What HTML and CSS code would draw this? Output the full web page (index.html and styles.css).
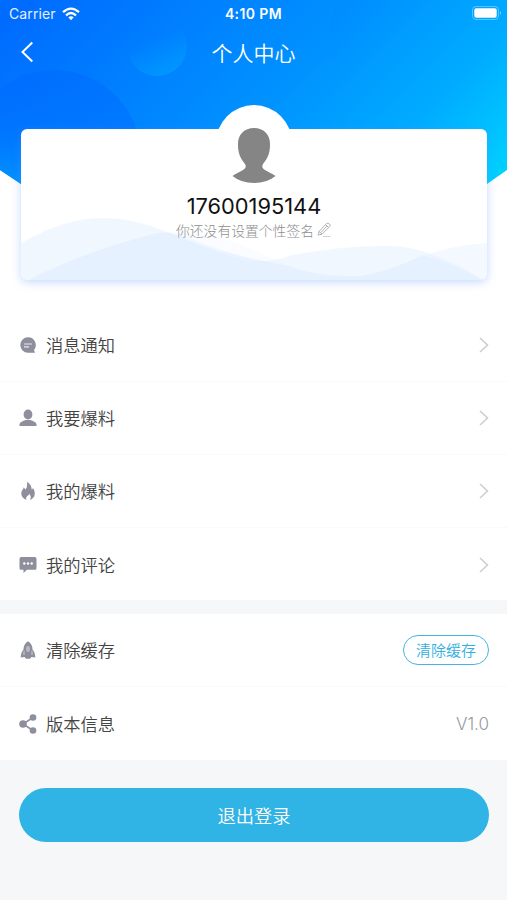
FILE: index.html
```html
<!DOCTYPE html>
<html lang="zh-CN">

<head>
    <meta charset="UTF-8">
    <meta name="viewport" content="width=device-width, initial-scale=1.0">
    <title>个人中心</title>
    <link rel="stylesheet" href="styles.css">
</head>

<body>
    <div class="header">
        <svg class="header-bg" width="507" height="250" viewBox="0 0 507 250">
            <defs>
                <linearGradient id="sky" gradientUnits="userSpaceOnUse" x1="30" y1="0" x2="370" y2="340">
                    <stop offset="0" stop-color="#006cff" />
                    <stop offset="0.5" stop-color="#0092ff" />
                    <stop offset="0.75" stop-color="#00acff" />
                    <stop offset="0.95" stop-color="#00d0ff" />
                </linearGradient>
                <linearGradient id="ball" x1="0.3" y1="0.3" x2="0.6" y2="1">
                    <stop offset="0.2" stop-color="#0098ff" stop-opacity="0" />
                    <stop offset="1" stop-color="#0098ff" stop-opacity="0.9" />
                </linearGradient>
                <linearGradient id="hill" x1="0.1" y1="0" x2="0" y2="1">
                    <stop offset="0" stop-color="#0064ff" stop-opacity="0.4" />
                    <stop offset="0.3" stop-color="#0070ff" stop-opacity="0.5" />
                    <stop offset="0.65" stop-color="#0098ff" stop-opacity="0.9" />
                </linearGradient>
                <linearGradient id="moon" x1="0" y1="0" x2="0.6" y2="0.6">
                    <stop offset="0" stop-color="#0078ff" stop-opacity="0.5" />
                    <stop offset="0.7" stop-color="#0098ff" stop-opacity="0" />
                </linearGradient>
                <clipPath id="curve">
                    <path d="M0 0H507V170L487 184Q380 250 254 250T21 184L0 170Z" />
                </clipPath>
            </defs>
            <g clip-path="url(#curve)">
                <rect width="507" height="250" fill="url(#sky)" />
                <circle cx="54" cy="157" r="87" fill="url(#hill)" />
                <circle cx="157" cy="46" r="30" fill="url(#ball)" />
                <circle cx="438" cy="45" r="110" fill="url(#moon)" />
            </g>
        </svg>

        <div class="status">
            <div class="carrier">
                <span>Carrier</span>
                <svg width="18" height="14" viewBox="0 0 18 14" fill="none" stroke="#fff" stroke-width="2.3">
                    <path d="M1 5.2Q9 -2 17 5.2" />
                    <path d="M4 8.3Q9 3.8 14 8.3" />
                    <path d="M6.3 10.3Q9 8.3 11.7 10.3L9 13.3Z" fill="#fff" stroke="none" />
                </svg>
            </div>
            <div class="time">4:10 PM</div>
            <svg class="battery" width="30" height="15" viewBox="0 0 30 15">
                <rect x="0.5" y="0.5" width="26" height="13" rx="3.5" fill="none" stroke="#fff" stroke-opacity="0.35" />
                <rect x="2.3" y="2.3" width="22.4" height="9.4" rx="2" fill="#fff" />
                <path d="M28 5Q30 7 28 9Z" fill="#fff" fill-opacity="0.5" />
            </svg>
        </div>

        <div class="nav">
            <svg width="14" height="22" viewBox="0 0 14 22" fill="none" stroke="#fff" stroke-width="2">
                <path d="M12.3 1.5L2.5 11L12.3 20.5" />
            </svg>
            <h1>个人中心</h1>
        </div>

        <div class="card">
            <svg class="waves" width="466" height="82" viewBox="0 0 466 82">
                <path d="M0 45Q45 20 80 20C135 20 165 48 221 61Q245 67 271 57Q325 47 370 48Q410 49 462 82H0Z" fill="#e4f0ff" fill-opacity="0.5" />
                <path d="M8 82Q55 57 125 38Q145 31 165 38Q200 56 271 69Q295 79 340 78Q370 72 396 60Q425 48 466 45V82Z" fill="#e4f0ff" fill-opacity="0.4" />
                <path d="M8 82Q55 57 125 38Q140 32 156 37C190 54 235 61 271 69Q295 79 340 78Q370 72 396 60L400 57Q430 64 462 82Z" fill="#d8ecff" fill-opacity="0.3" />
                <path d="M140 34Q190 33 221 47Q250 59 271 69Q240 66 221 61C180 52 160 43 140 34Z" fill="#e4f0ff" fill-opacity="0.2" />
            </svg>
            <div class="avatar">
                <svg width="44" height="56" viewBox="0 0 44 56">
                    <path d="M22 0C32 0 38.500 7 38 17C38 26 35 31 31 36C28 42 35 42 43.500 48Q35 55 22 55T0.500 48C9 42 16 42 13 36C9 31 6 26 6 17C5.500 7 12 0 22 0Z" fill="#858585" />
                </svg>
            </div>
            <div class="phone">17600195144</div>
            <div class="sign">
                <span>你还没有设置个性签名</span>
                <svg width="16" height="16" viewBox="0 0 16 16" fill="none" stroke="#aaa" stroke-width="0.9">
                    <path d="M2 13L3 9.500L10.500 1.500Q12 0.500 13.500 2T13.700 4.500L6 12.200Z" />
                    <path d="M3 9.500L6 12M9.500 2.700L12.700 5.500M5 10.500L11 4" />
                    <path d="M7 14.500H14.500" stroke="#ccc" />
                </svg>
            </div>
        </div>
    </div>

    <div class="list">
        <div class="item">
            <svg class="icon" width="18" height="18" viewBox="0 0 18 18">
                <path d="M9 1.300A7.700 7.700 0 1 0 9 16.700H16L15 13.900A7.700 7.700 0 0 0 9 1.300Z" fill="#8e8e9c" />
                <path d="M5 8H13M5 10.800H10" stroke="#fff" stroke-opacity="0.8" stroke-width="1.200" />
            </svg>
            <span>消息通知</span>
            <svg class="arrow" width="10" height="16" viewBox="0 0 10 16"><path d="M1 1L8.500 8L1 15" /></svg>
        </div>
        <div class="item">
            <svg class="icon" width="18" height="18" viewBox="0 0 18 18" fill="#8e8e9c">
                <ellipse cx="9" cy="5.500" rx="4.400" ry="4.900" />
                <path d="M0.500 17V15.300Q0.500 13.500 3 12.500L6.500 11H11.500L15 12.500Q17.500 13.500 17.500 15.300V17Z" />
            </svg>
            <span>我要爆料</span>
            <svg class="arrow" width="10" height="16" viewBox="0 0 10 16"><path d="M1 1L8.500 8L1 15" /></svg>
        </div>
        <div class="item">
            <svg class="icon" width="18" height="18" viewBox="0 0 18 18">
                <path d="M7.600 18C4 16.500 2.300 14.500 2.300 11.500C2.500 8 4.800 7.500 4.500 5.300Q6 6.400 6.300 7.600C8.500 5.500 8.200 2.500 8 0C12 2.200 12.500 5 12.800 7.800Q14 7 13.900 5.800C15.300 8 16 10 15.700 12.500C15.500 15.500 13 17.300 10.800 18Q13 15 10.300 11.700Q9.800 13.300 8.600 13.700Q6.200 15.600 7.600 18Z" fill="#8e8e9c" />
            </svg>
            <span>我的爆料</span>
            <svg class="arrow" width="10" height="16" viewBox="0 0 10 16"><path d="M1 1L8.500 8L1 15" /></svg>
        </div>
        <div class="item">
            <svg class="icon" width="18" height="18" viewBox="0 0 18 18">
                <path d="M2.200 1H15.800Q17.500 1 17.500 2.700V12.200Q17.500 13.800 15.800 13.800H8L4.500 17V13.800H2.200Q0.500 13.800 0.500 12.200V2.700Q0.500 1 2.200 1Z" fill="#8e8e9c" />
                <g fill="#fff">
                    <circle cx="5.300" cy="7.500" r="1.200" />
                    <circle cx="9" cy="7.500" r="1.200" />
                    <circle cx="12.700" cy="7.500" r="1.200" />
                </g>
            </svg>
            <span>我的评论</span>
            <svg class="arrow" width="10" height="16" viewBox="0 0 10 16"><path d="M1 1L8.500 8L1 15" /></svg>
        </div>
    </div>

    <div class="list">
        <div class="item">
            <svg class="icon" width="18" height="18" viewBox="0 0 18 18">
                <path d="M9 0.300Q13.500 3 13.500 8.500Q16 11 16.300 16.500L12.500 16L11 17.800H7L5.500 16L1.700 16.500Q2 11 4.500 8.500Q4.500 3 9 0.300Z" fill="#8e8e9c" />
                <path d="M5 10V14M13 10V14" stroke="#fff" stroke-width="0.600" />
                <ellipse cx="9" cy="8" rx="2" ry="3" fill="#b9b9c3" />
            </svg>
            <span>清除缓存</span>
            <button class="clear">清除缓存</button>
        </div>
        <div class="item">
            <svg class="icon" width="18" height="20" viewBox="0 0 18 20" fill="#8e8e9c">
                <path d="M14 3.500L4 10L14 16.500" fill="none" stroke="#8e8e9c" stroke-width="1.500" />
                <circle cx="14" cy="3.500" r="3.300" />
                <circle cx="4" cy="10" r="3.800" />
                <circle cx="14" cy="16.500" r="3.300" />
            </svg>
            <span>版本信息</span>
            <div class="version">V1.0</div>
        </div>
    </div>

    <button class="logout">退出登录</button>
</body>

</html>
```
FILE: styles.css
```css
* {
    box-sizing: border-box;
}

body {
    margin: 0;
    min-height: 900px;
    background-color: #f6f7f9;
    font-family: Inter, "Noto Sans CJK SC", sans-serif;
    color: #444;
}

button {
    font-family: inherit;
}

.header {
    position: relative;
    height: 309px;
    background-color: #fff;
}

.header-bg {
    position: absolute;
    left: 0;
    top: 0;
}

.status {
    position: relative;
    display: grid;
    grid-template-columns: 1fr auto 1fr;
    align-items: center;
    height: 27px;
    padding: 0 5px 0 9px;
    color: #fff;
    font-size: 14px;
}

.carrier {
    display: flex;
    align-items: center;
    gap: 6px;
    color: #e4f0ff;
    letter-spacing: 0.1px;
}

.time {
    margin-right: 4px;
    font-size: 14px;
    font-weight: 600;
    letter-spacing: 0.4px;
}

.battery {
    justify-self: end;
}

.nav {
    position: relative;
    display: grid;
    grid-template-columns: 14px 1fr 14px;
    align-items: center;
    height: 49px;
    padding: 0 19px 0 20px;
    color: #fff;
}

.nav h1 {
    margin: 0 1px 0 0;
    font-size: 21px;
    font-weight: 350;
    text-align: center;
}

.card {
    position: relative;
    display: flex;
    flex-direction: column;
    align-items: center;
    height: 151px;
    margin: 53px 20px 0 21px;
    border-radius: 6px;
    background-color: #fff;
    box-shadow: 0 2px 10px rgba(80, 145, 255, 0.35);
}

.waves {
    position: absolute;
    left: 0;
    bottom: 0;
    border-radius: 0 0 6px 6px;
}

/* 头像超出卡片顶部 */
.avatar {
    display: flex;
    justify-content: center;
    width: 76px;
    height: 76px;
    margin-top: -24px;
    padding-top: 23px;
    border-radius: 50%;
    background-color: #fff;
}

.phone {
    position: relative;
    margin-top: 12px;
    font-size: 21.8px;
    line-height: 26px;
    color: #111;
}

.sign {
    position: relative;
    display: flex;
    align-items: center;
    gap: 2px;
    height: 20px;
    margin-top: 1px;
    font-size: 13.8px;
    font-weight: 300;
    color: #8e8e8e;
}

.list {
    margin-bottom: 14px;
    background-color: #fff;
}

.item {
    display: flex;
    align-items: center;
    height: 73px;
    padding: 0 18px 0 19px;
    font-size: 17.3px;
    font-weight: 350;
    border-bottom: 1px solid #fafafa;
}

.item > span {
    margin-top: -1px;
}

.header + .list {
    height: 291px;
}

.item:last-child {
    border-bottom: none;
}

.icon {
    margin-right: 9px;
}

.arrow {
    margin-left: auto;
    fill: none;
    stroke: #ccc;
    stroke-width: 1.5;
}

.clear {
    width: 86px;
    height: 30px;
    margin-left: auto;
    padding: 0 0 1px;
    border: 1.5px solid #46b5e2;
    border-radius: 15px;
    background-color: #fff;
    color: #32afe0;
    font-size: 15px;
    font-weight: 350;
}

.version {
    margin-left: auto;
    font-size: 17px;
    font-weight: 350;
    color: #999;
}

.logout {
    display: block;
    width: 470px;
    height: 54px;
    margin: 28px 0 0 19px;
    padding: 0;
    border: none;
    border-radius: 27px;
    background-color: #30b3e5;
    color: #fff;
    font-size: 18.3px;
    font-weight: 350;
}
```
